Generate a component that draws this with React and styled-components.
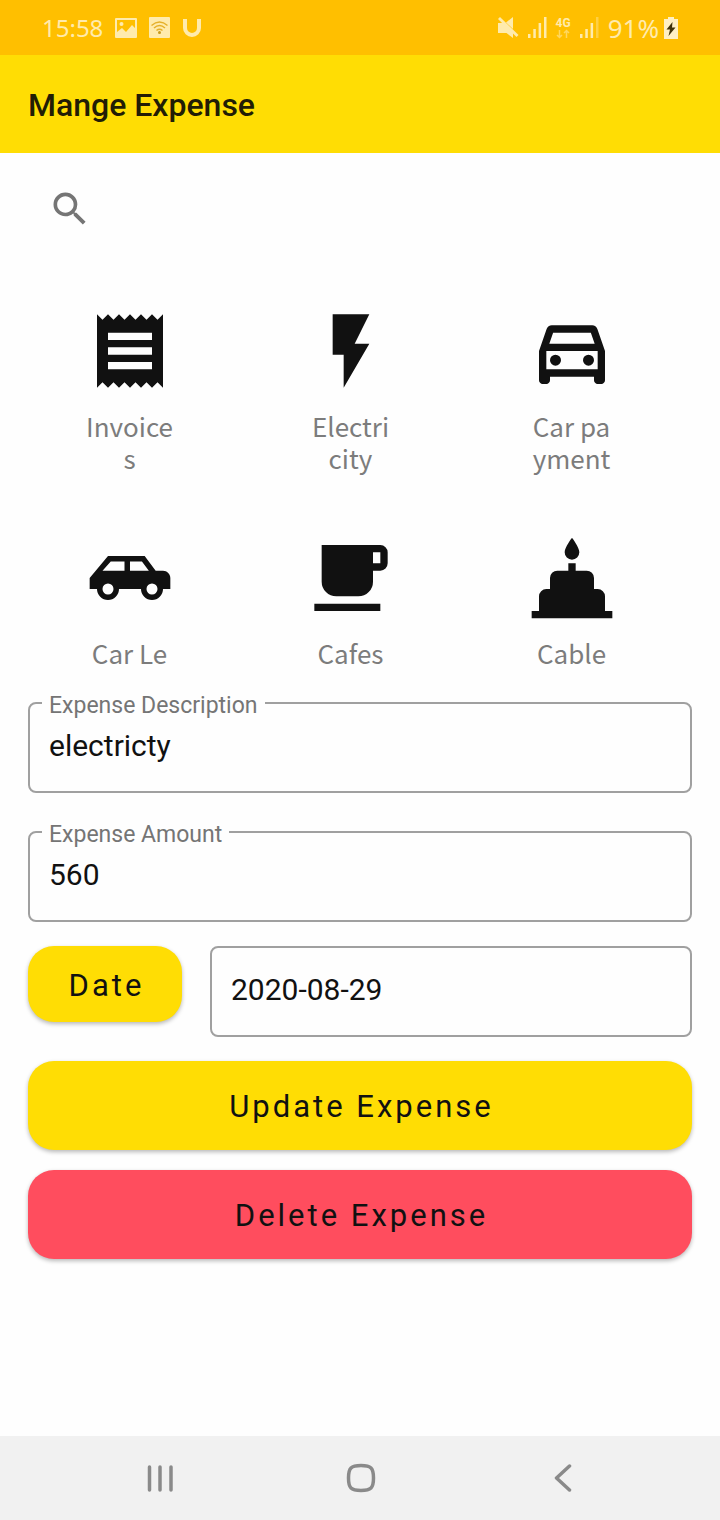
import React, { useState } from "react";
import styled, { createGlobalStyle } from "styled-components";

const GlobalStyle = createGlobalStyle`
  * { box-sizing: border-box; }
  body { margin: 0; background: #fefefe; }
  button, input { font-family: Roboto, sans-serif; }
`;

const Screen = styled.div`
  display: flex;
  flex-direction: column;
  min-height: 100vh;
  font-family: Roboto, sans-serif;
  color: #111;
`;

const StatusBar = styled.div`
  display: flex;
  align-items: center;
  justify-content: space-between;
  height: 55px;
  padding: 0 42px;
  background: #ffbf00;
  color: #ffebad;
  font-family: "Noto Sans", sans-serif;
`;

const StatusGroup = styled.div`
  display: flex;
  align-items: center;
  gap: ${(p) => p.$gap}px;
`;

const StatusText = styled.span`
  font-size: ${(p) => (p.$large ? 26 : 24)}px;
  font-weight: 400;
  line-height: 32px;
`;

const Network = styled.span`
  display: flex;
  flex-direction: column;
  align-items: center;
  font: 700 12px/12px Roboto, sans-serif;
`;

const AppBar = styled.header`
  display: flex;
  align-items: center;
  height: 98px;
  padding: 2px 28px 0;
  background: #ffdd04;
`;

const Title = styled.h1`
  margin: 0;
  font-size: 32px;
  font-weight: 500;
  line-height: 40px;
  color: #221d05;
`;

const Main = styled.main`
  flex: 1;
`;

const SearchRow = styled.label`
  display: flex;
  align-items: center;
  gap: 12px;
  height: 44px;
  margin: 34px 48px 76px;
  color: #757575;
`;

const SearchInput = styled.input`
  flex: 1;
  min-width: 0;
  border: 0;
  outline: 0;
  background: transparent;
  font-size: 30px;
`;

const CategoryGrid = styled.div`
  display: grid;
  grid-template-columns: repeat(3, 1fr);
  justify-items: center;
  align-items: start;
  row-gap: 60px;
  height: 357px;
  padding: 0 38px 0 19px;
  overflow: hidden;
`;

const Category = styled.button`
  display: flex;
  flex-direction: column;
  align-items: center;
  gap: 15px;
  padding: 0;
  border: 0;
  background: none;
  color: #111;
`;

const CategoryLabel = styled.span`
  font-family: "Noto Sans CJK SC", "Noto Sans", sans-serif;
  font-size: 26px;
  font-weight: 400;
  line-height: 32px;
  color: #7c7c7c;
  white-space: pre-line;
  text-align: center;
`;

const Form = styled.form`
  display: flex;
  flex-direction: column;
  padding: 38px 28px;
`;

const Field = styled.div`
  position: relative;
  flex: 1;
  min-width: 0;
  margin-bottom: ${(p) => p.$space || 0}px;
`;

const FieldLabel = styled.label`
  position: absolute;
  top: -10px;
  left: 14px;
  padding: 0 7px;
  background: #fefefe;
  font-size: 23px;
  line-height: 28px;
  color: #757575;
`;

const FieldInput = styled.input`
  display: block;
  width: 100%;
  height: 91px;
  padding: 0 19px 4px;
  border: 2px solid #a0a0a0;
  border-radius: 8px;
  outline: 0;
  background: transparent;
  font-size: 30px;
  color: #111;
`;

const DateRow = styled.div`
  display: flex;
  align-items: flex-start;
  gap: 28px;
  margin-bottom: 24px;
`;

const ActionButton = styled.button`
  height: ${(p) => (p.$compact ? 76 : 89)}px;
  width: ${(p) => (p.$compact ? "154px" : "100%")};
  margin-bottom: ${(p) => (p.$compact ? 0 : 20)}px;
  padding: 2px 0 0 3px;
  border: 0;
  border-radius: 26px;
  background: ${(p) => (p.$danger ? "#ff4d5e" : "#ffdd04")};
  box-shadow: 0 2px 4px rgba(0, 0, 0, 0.28);
  font-size: 31px;
  letter-spacing: 3px;
  color: #111;
`;

const NavBar = styled.nav`
  display: flex;
  align-items: center;
  justify-content: space-around;
  height: 84px;
  padding: 0 57px 0 60px;
  background: #f1f1f1;
`;

const NavButton = styled.button`
  display: flex;
  padding: 0;
  border: 0;
  background: none;
  color: #8a8a8a;
`;

const categories = [
  {
    label: "Invoice\ns",
    path: "M18 17H6v-2h12v2zm0-4H6v-2h12v2zm0-4H6V7h12v2zM3 22l1.5-1.5L6 22l1.5-1.5L9 22l1.5-1.5L12 22l1.5-1.5L15 22l1.5-1.5L18 22l1.5-1.5L21 22V2l-1.5 1.5L18 2l-1.5 1.5L15 2l-1.5 1.5L12 2l-1.5 1.5L9 2 7.5 3.5 6 2 4.5 3.5 3 2v20z",
  },
  { label: "Electri\ncity", path: "M7 2v11h3v9l7-12h-4l4-8z" },
  {
    label: "Car pa\nyment",
    path: "M18.92 6.01C18.72 5.42 18.16 5 17.5 5h-11c-.66 0-1.21.42-1.42 1.01L3 12v8c0 .55.45 1 1 1h1c.55 0 1-.45 1-1v-1h12v1c0 .55.45 1 1 1h1c.55 0 1-.45 1-1v-8l-2.08-5.99zM6.85 7h10.29l1.04 3H5.81l1.04-3zM19 17H5v-5h14v5zM7.5 13a1.5 1.5 0 1 0 0 3a1.5 1.5 0 1 0 0-3zM16.5 13a1.5 1.5 0 1 0 0 3a1.5 1.5 0 1 0 0-3z",
  },
  {
    label: "Car Le",
    path: "M16 6l3 4h2c1.11 0 2 .89 2 2v3h-2a3 3 0 0 1-6 0H9a3 3 0 0 1-6 0H1v-3l5-6h10zM10.5 7.5H6.75L4.5 10h6V7.5zM12 7.5V10h5.14l-1.89-2.5H12zM6 13.5a1.5 1.5 0 1 0 0 3a1.5 1.5 0 1 0 0-3zM18 13.5a1.5 1.5 0 1 0 0 3a1.5 1.5 0 1 0 0-3z",
  },
  {
    label: "Cafes",
    path: "M2 21h18v-2H2v2zM20 8h-2V5h2v3zM20 3H4v10a4 4 0 0 0 4 4h6a4 4 0 0 0 4-4v-3h2a2 2 0 0 0 2-2V5a2 2 0 0 0-2-2z",
  },
  {
    label: "Cable",
    path: "M12 1c0 0-2 2.6-2 4a2 2 0 0 0 4 0c0-1.400-2-4-2-4zM11 8h2v2h3a2 2 0 0 1 2 2v3h1a2 2 0 0 1 2 2v4h2v2H1v-2h2v-4a2 2 0 0 1 2-2h1v-3a2 2 0 0 1 2-2h3z",
  },
];

function Signal({ faded }) {
  return (
    <svg width="19" height="21" viewBox="0 0 19 21" fill="currentColor" aria-hidden="true">
      <rect x="0" y="17" width="2.5" height="4" />
      <rect x="5.3" y="12" width="2.5" height="9" />
      <rect x="10.6" y="6" width="2.5" height="15" />
      <rect x="16" y="0" width="2.5" height="21" opacity={faded ? 0.4 : 1} />
    </svg>
  );
}

function StatusIcons() {
  return (
    <StatusBar>
      <StatusGroup $gap={12}>
        <StatusText>15:58</StatusText>
        <svg width="22" height="20" viewBox="0 0 22 20" aria-hidden="true">
          <path
            fill="currentColor"
            fillRule="evenodd"
            d="M1 0h20a1 1 0 0 1 1 1v18a1 1 0 0 1-1 1H1a1 1 0 0 1-1-1V1a1 1 0 0 1 1-1zM2 2v12l5-4 4 4 6-7 3 3V2zM6.5 4a2 2 0 1 1 0 4a2 2 0 1 1 0-4z"
          />
        </svg>
        <svg width="21" height="21" viewBox="0 0 21 21" fill="none" aria-hidden="true">
          <rect width="21" height="21" rx="1" fill="currentColor" />
          <g stroke="#e5b02a" strokeWidth="1.5">
            <path d="M2.5 8.5Q10.5 1.5 18.5 8.5" />
            <path d="M5 11Q10.5 6 16 11" />
            <path d="M7.5 13.5Q10.5 11 13.5 13.5" />
          </g>
          <circle cx="10.5" cy="15.5" r="1.5" fill="#c99a1c" />
        </svg>
        <svg width="20" height="22" viewBox="0 0 20 22" fill="none" aria-hidden="true">
          <path d="M3 2v9a7 7 0 0 0 14 0V2" stroke="currentColor" strokeWidth="4" />
        </svg>
      </StatusGroup>
      <StatusGroup $gap={9}>
        <svg width="21" height="22" viewBox="0 0 21 22" fill="currentColor" aria-hidden="true">
          <path d="M0 6h5l10 9.5V21l-6.5-5H0z" />
          <path d="M8 5.5L15 0v12z" />
          <path d="M0 2l2-2 18.500 18-2 2z" />
        </svg>
        <Signal />
        <Network>
          4G
          <svg width="14" height="10" viewBox="0 0 14 10" fill="none" stroke="currentColor" opacity=".55" aria-hidden="true">
            <path d="M3.5 1v7M1 6l2.5 2.5L6 6M10.5 9V2M8 4l2.5-2.5L13 4" strokeWidth="1.5" />
          </svg>
        </Network>
        <Signal faded />
        <StatusGroup $gap={5}>
          <StatusText $large>91%</StatusText>
          <svg width="14" height="22" viewBox="0 0 14 22" aria-hidden="true">
            <path d="M4 0h6v2h4v20H0V2h4z" fill="#fff0c4" />
            <path d="M8.500 5L2.5 12.5h3.5L4.5 19l7-8.5H8z" fill="#40320a" />
          </svg>
        </StatusGroup>
      </StatusGroup>
    </StatusBar>
  );
}

function TextField({ id, label, hiddenLabel, value, space }) {
  const [text, setText] = useState(value);
  return (
    <Field $space={space}>
      {label && <FieldLabel htmlFor={id}>{label}</FieldLabel>}
      <FieldInput id={id} aria-label={hiddenLabel} value={text} onChange={(e) => setText(e.target.value)} />
    </Field>
  );
}

export default function App() {
  return (
    <Screen>
      <GlobalStyle />
      <StatusIcons />
      <AppBar>
        <Title>Mange Expense</Title>
      </AppBar>
      <Main>
        <SearchRow>
          <svg width="44" height="44" viewBox="0 0 24 24" fill="currentColor" aria-hidden="true">
            <path d="M15.5 14h-.79l-.28-.27A6.471 6.471 0 0 0 16 9.5 6.5 6.5 0 1 0 9.5 16c1.61 0 3.09-.59 4.23-1.57l.27.28v.79l5 4.99L20.49 19l-4.99-5zm-6 0C7.01 14 5 11.99 5 9.5S7.01 5 9.5 5 14 7.01 14 9.5 11.99 14 9.5 14z" />
          </svg>
          <SearchInput type="search" aria-label="Search categories" />
        </SearchRow>
        <CategoryGrid>
          {categories.map(({ label, path }) => (
            <Category key={label} type="button">
              <svg width="88" height="88" viewBox="0 0 24 24" fill="currentColor" fillRule="evenodd" aria-hidden="true">
                <path d={path} />
              </svg>
              <CategoryLabel>{label}</CategoryLabel>
            </Category>
          ))}
        </CategoryGrid>
        <Form onSubmit={(e) => e.preventDefault()}>
          <TextField id="description" label="Expense Description" value="electricty" space={38} />
          <TextField id="amount" label="Expense Amount" value="560" space={24} />
          <DateRow>
            <ActionButton type="button" $compact>Date</ActionButton>
            <TextField id="date" hiddenLabel="Expense date" value="2020-08-29" />
          </DateRow>
          <ActionButton type="submit">Update Expense</ActionButton>
          <ActionButton type="button" $danger>Delete Expense</ActionButton>
        </Form>
      </Main>
      <NavBar>
        <NavButton type="button" aria-label="Recent apps">
          <svg width="28" height="28" viewBox="0 0 28 28" stroke="currentColor" strokeWidth="3.5" strokeLinecap="round">
            <path d="M3.5 3v23M14 3v23M25 3v23" />
          </svg>
        </NavButton>
        <NavButton type="button" aria-label="Home">
          <svg width="30" height="30" viewBox="0 0 30 30" fill="none" stroke="currentColor" strokeWidth="3.5">
            <path d="M15 2.5C25 2.5 27.5 5 27.5 15S25 27.5 15 27.5 2.5 25 2.5 15 5 2.5 15 2.5z" />
          </svg>
        </NavButton>
        <NavButton type="button" aria-label="Back">
          <svg width="28" height="28" viewBox="0 0 28 28" fill="none" stroke="currentColor" strokeWidth="3.5" strokeLinecap="round" strokeLinejoin="round">
            <path d="M20.5 2L7.5 14l13 12" />
          </svg>
        </NavButton>
      </NavBar>
    </Screen>
  );
}
